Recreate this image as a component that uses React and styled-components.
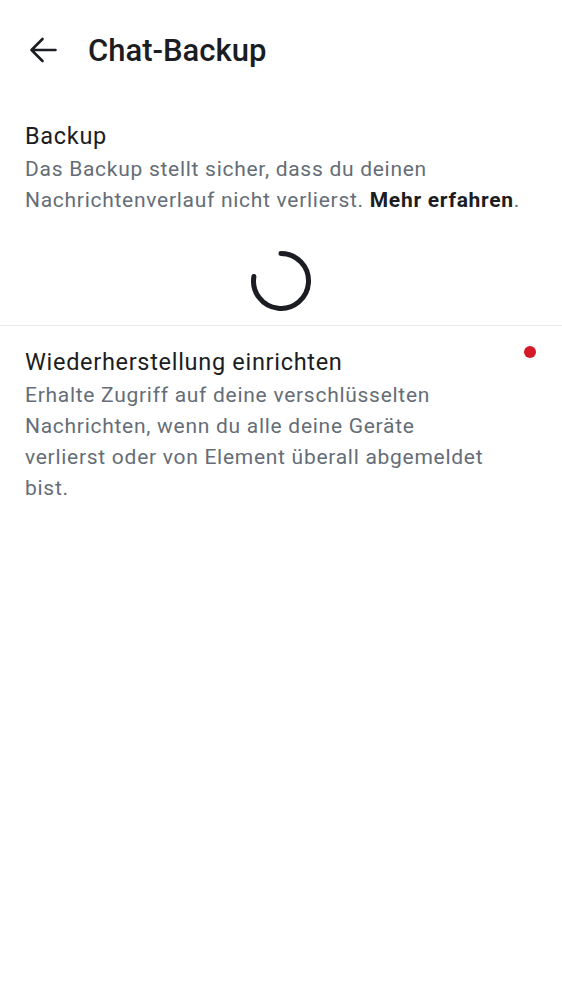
import styled, { createGlobalStyle } from "styled-components"

const GlobalStyle = createGlobalStyle`
  html, body {
    margin: 0;
    padding: 0;
    background: #ffffff;
  }
  body {
    font-family: Roboto, "Noto Sans", sans-serif;
    -webkit-font-smoothing: antialiased;
  }
`

const App = () => {
  return (
    <>
      <GlobalStyle />
      <Screen>
        <TopBar>
          <BackButton aria-label="Zurück">
            <svg width="28" height="28" viewBox="0 0 28 28" fill="none">
              <path
                d="M2.5 14H26.5M13.5 3L2.5 14l11 11"
                stroke="#1b1d22"
                strokeWidth="2.6"
                strokeLinecap="round"
                strokeLinejoin="round"
              />
            </svg>
          </BackButton>
          <Title>Chat-Backup</Title>
        </TopBar>

        <Section>
          <SectionTitle>Backup</SectionTitle>
          <SectionText>
            Das Backup stellt sicher, dass du deinen Nachrichtenverlauf nicht verlierst.{" "}
            <strong>Mehr erfahren</strong>.
          </SectionText>
        </Section>

        <SpinnerRow>
          <svg width="66" height="66" viewBox="0 0 66 66">
            <path
              d="M33 5.5 A27.5 27.5 0 1 1 5.9 28.5"
              fill="none"
              stroke="#1b1d22"
              strokeWidth="5"
              strokeLinecap="round"
            />
          </svg>
        </SpinnerRow>

        <Divider />

        <Section $top={20}>
          <SectionHead>
            <SectionTitle>Wiederherstellung einrichten</SectionTitle>
            <Dot />
          </SectionHead>
          <SectionText $narrow>
            Erhalte Zugriff auf deine verschlüsselten Nachrichten, wenn du alle deine Geräte
            verlierst oder von Element überall abgemeldet bist.
          </SectionText>
        </Section>
      </Screen>
    </>
  )
}

export default App

const Screen = styled.div`
  width: 562px;
  min-height: 1000px;
  background: #ffffff;
  display: flex;
  flex-direction: column;
`

const TopBar = styled.div`
  height: 100px;
  display: flex;
  align-items: center;
  padding: 0 16px 0 29px;
  gap: 31px;
`

const BackButton = styled.div`
  width: 28px;
  height: 28px;
  display: flex;
  align-items: center;
  justify-content: center;
`

const Title = styled.h1`
  margin: 0;
  font-size: 31px;
  font-weight: 500;
  color: #1b1d22;
`

const Section = styled.div`
  padding: ${(p) => p.$top || 20}px 25px 0 25px;
`

const SectionHead = styled.div`
  display: flex;
  justify-content: space-between;
  align-items: flex-start;
`

const SectionTitle = styled.div`
  font-size: 23.5px;
  line-height: 32px;
  letter-spacing: 0.7px;
  color: #1b1d22;
`

const SectionText = styled.p`
  margin: 2px 0 0 0;
  font-size: 21px;
  line-height: 31px;
  color: #656d77;
  letter-spacing: 0.72px;
  max-width: ${(p) => (p.$narrow ? "468px" : "none")};

  strong {
    color: #1b1d22;
    font-weight: 700;
  }
`

const SpinnerRow = styled.div`
  display: flex;
  justify-content: center;
  padding: 32px 0 11px;
`

const Divider = styled.div`
  height: 1px;
  background: #e8e9ec;
`

const Dot = styled.span`
  width: 12px;
  height: 12px;
  border-radius: 50%;
  background: #d51928;
  margin-top: 0;
  margin-right: 1px;
`
